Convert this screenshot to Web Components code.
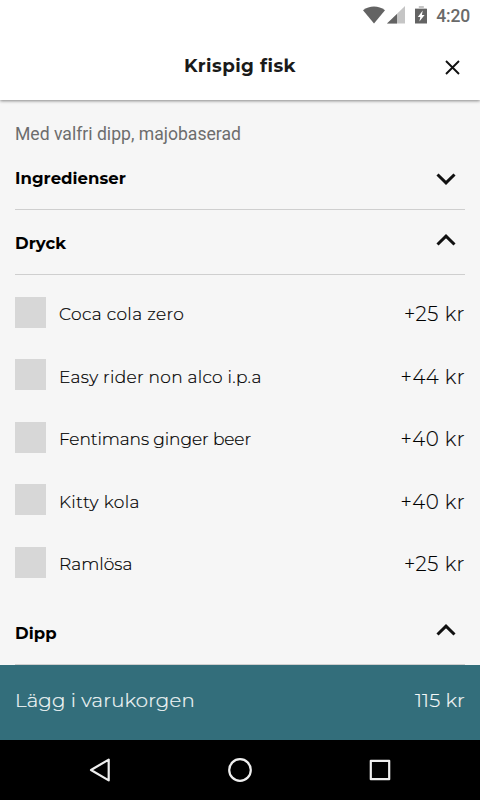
<!DOCTYPE html>
<html lang="sv">
<head>
<meta charset="utf-8">
<title>Krispig fisk</title>
<style>
html, body { margin: 0; height: 100%; }
body { font-family: Montserrat, Inter, "Liberation Sans", sans-serif; background: #f6f6f6; color: #111; overflow: hidden; }
</style>
</head>
<body>
<dish-screen></dish-screen>
<script>
const define = (name, html) => {
  const template = document.createElement('template');
  template.innerHTML = html;
  customElements.define(name, class extends HTMLElement {
    constructor() {
      super();
      this.attachShadow({ mode: 'open' }).append(template.content.cloneNode(true));
    }
  });
};

define('status-bar', `
<style>
:host { display: flex; height: 32px; align-items: center; justify-content: flex-end; padding-right: 10px; background: #fff; position: relative; z-index: 2; }
svg { display: block; margin-top: -2px; }
.time { font: 500 17.5px/32px Roboto, sans-serif; color: #6a6a6a; letter-spacing: -.15px; margin-left: 7px; }
</style>
<svg width="66" height="20" viewBox="0 0 66 20">
  <path fill="#636363" d="M0 5.2C6.4.3 15.600.3 22 5.200L11 18.500Z"/>
  <path fill="#c5c5c5" d="M24 18.500L42 1V18.500Z"/>
  <path fill="#636363" d="M24 18.500L34 9V18.500Z"/>
  <path fill="#c5c5c5" d="M55.800 1h5v2h3v2H52V3h3.800Z"/>
  <path fill="#636363" d="M52 4h12v14.500H52Z"/>
  <path fill="#fff" d="M59.800 5.500L54.800 12h2.500L56.400 16.500l5.200-6.500h-2.700Z"/>
</svg>
<span class="time">4:20</span>`);

define('title-bar', `
<style>
:host { display: grid; grid-template-columns: 48px 1fr 48px; height: 68px; align-items: center; background: #fff; box-shadow: 0 1px 3px rgba(0,0,0,.45); position: relative; z-index: 1; }
h1 { grid-column: 2; margin: 0; text-align: center; font-weight: 700; font-size: 18.300px; line-height: 24px; letter-spacing: .42px; padding-bottom: 1px; color: #1a1a1a; }
svg { display: block; margin: 2px 0 0 13px; }
</style>
<h1><slot></slot></h1>
<svg width="15" height="15" viewBox="0 0 15 15"><path d="M1 1L14 14M14 1L1 14" stroke="#111" stroke-width="1.900"/></svg>`);

define('section-head', `
<style>
:host { display: flex; box-sizing: border-box; height: 65px; justify-content: space-between; align-items: flex-start; border-bottom: 1px solid #cfcfcf; padding: 22px 9px 0 0; color: #000; }
h2 { margin: 0; font-weight: 700; font-size: 16.500px; line-height: 22px; letter-spacing: .06px; }
svg { display: block; margin-top: 1.500px; }
:host([closed]) svg { transform: scaleY(-1); margin-top: 6px; }
</style>
<h2><slot></slot></h2>
<svg width="20" height="12" viewBox="0 0 20 12"><path d="M1.500 10.500L10 2.200L18.500 10.500" fill="none" stroke="#111" stroke-width="3"/></svg>`);

define('option-row', `
<style>
:host { display: grid; grid-template-columns: 31px 1fr auto; column-gap: 13px; height: 62.500px; align-items: center; color: #000; }
i { width: 31px; height: 31px; background: #d7d7d7; }
.name { font-size: 17px; font-weight: 300; line-height: 22px; padding-top: 4px; letter-spacing: var(--name-gap, .3px); white-space: nowrap; -webkit-text-stroke: .2px; }
.price { font-size: 19.800px; font-weight: 300; line-height: 24px; padding-top: 4px; letter-spacing: var(--price-gap, .5px); white-space: nowrap; -webkit-text-stroke: .15px; }
</style>
<i></i><span class="name"><slot></slot></span><span class="price"><slot name="price"></slot></span>`);

define('cart-bar', `
<style>
:host { display: flex; height: 75px; box-sizing: border-box; justify-content: space-between; padding: 23px 15px 0; background: #336e7b; color: #f4f8f8; font-size: 19.700px; font-weight: 300; line-height: 24px; -webkit-text-stroke: .2px; }
span { letter-spacing: .18px; }
</style>
<span><slot></slot></span><span><slot name="price"></slot></span>`);

define('nav-bar', `
<style>
:host { display: grid; grid-template-columns: repeat(3, 140px); justify-content: center; justify-items: center; align-items: center; height: 60px; background: #000; }
svg { display: block; fill: none; stroke: #eee; stroke-width: 2.200; stroke-linejoin: round; }
</style>
<svg width="24" height="24" viewBox="0 0 24 24"><path d="M20.700 1.600V22.400L3 12Z"/></svg>
<svg width="26" height="26" viewBox="0 0 26 26"><circle cx="13" cy="13" r="10.800"/></svg>
<svg width="22" height="22" viewBox="0 0 22 22"><rect x="1.800" y="1.800" width="18.400" height="18.400"/></svg>`);

define('dish-screen', `
<style>
:host { display: grid; grid-template-rows: 32px 68px 565px 75px 60px; height: 800px; width: 480px; }
main { padding: 23px 15px 0; }
p { margin: 0; height: 22px; font: 400 17.600px/22px Roboto, sans-serif; color: #6d6d6d; }
.options { padding: 6px 0 6.500px; }
</style>
<status-bar></status-bar>
<title-bar>Krispig fisk</title-bar>
<main>
  <p>Med valfri dipp, majobaserad</p>
  <section-head closed>Ingredienser</section-head>
  <section-head>Dryck</section-head>
  <div class="options">
    <option-row style="--name-gap:.38px;--price-gap:.6px">Coca cola zero<span slot="price">+25 kr</span></option-row>
    <option-row style="--name-gap:.3px">Easy rider non alco i.p.a<span slot="price">+44 kr</span></option-row>
    <option-row style="--name-gap:-.09px">Fentimans ginger beer<span slot="price">+40 kr</span></option-row>
    <option-row style="--name-gap:.42px">Kitty kola<span slot="price">+40 kr</span></option-row>
    <option-row style="--name-gap:.03px;--price-gap:.6px">Ramlösa<span slot="price">+25 kr</span></option-row>
  </div>
  <section-head>Dipp</section-head>
</main>
<cart-bar>Lägg i varukorgen<span slot="price">115 kr</span></cart-bar>
<nav-bar></nav-bar>`);
</script>
</body>
</html>
